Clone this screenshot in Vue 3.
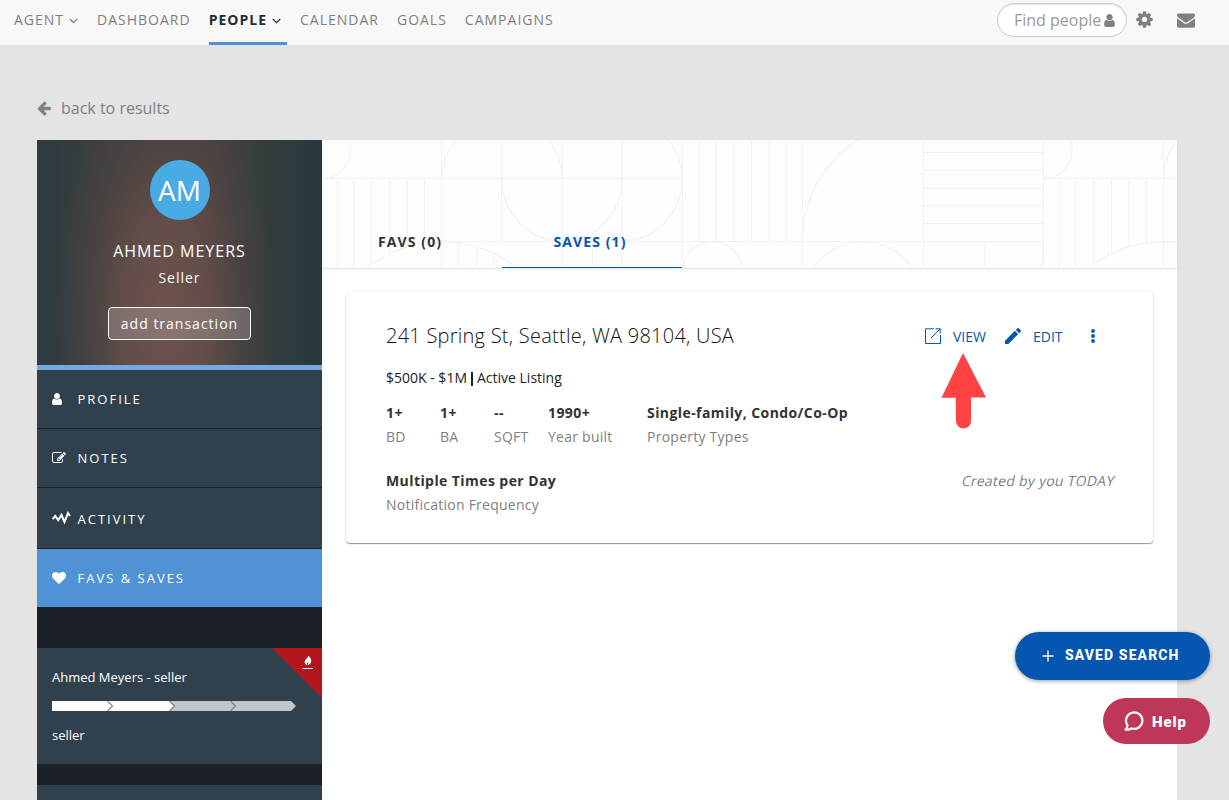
<script setup>
import { ref } from 'vue'

const navItems = [
  { label: 'AGENT', menu: true },
  { label: 'DASHBOARD' },
  { label: 'PEOPLE', menu: true },
  { label: 'CALENDAR' },
  { label: 'GOALS' },
  { label: 'CAMPAIGNS' }
]
const activeNav = ref('PEOPLE')

const userPath = 'M1536 1399q0 109-62.5 187t-150.5 78h-854q-88 0-150.5-78t-62.5-187q0-85 8.5-160.5t31.5-152 58.5-131 94-89 134.5-34.5q131 128 313 128t313-128q76 0 134.5 34.5t94 89 58.5 131 31.5 152 8.5 160.5zm-256-887q0 159-112.5 271.5t-271.5 112.5-271.5-112.5-112.5-271.5 112.5-271.5 271.5-112.5 271.5 112.5 112.5 271.5z'

const menuItems = [
  { id: 'profile', label: 'PROFILE', box: '256 0 1280 1792', width: 10, path: userPath },
  {
    id: 'notes',
    label: 'NOTES',
    box: '0 0 1792 1792',
    width: 14,
    path: 'M888 1184l116-116-152-152-116 116v56h96v96h56zm440-720q-16-16-33 1l-350 350q-17 17-1 33t33-1l350-350q17-17 1-33zm80 594v190q0 119-84.5 203.5t-203.5 84.5h-832q-119 0-203.5-84.5t-84.5-203.5v-832q0-119 84.5-203.5t203.5-84.5h832q63 0 117 25 15 7 18 23 3 17-9 29l-49 49q-14 14-32 8-23-6-45-6h-832q-66 0-113 47t-47 113v832q0 66 47 113t113 47h832q66 0 113-47t47-113v-126q0-13 9-22l64-64q15-15 35-7t20 29zm-96-738l288 288-672 672h-288v-288zm444 132l-92 92-288-288 92-92q28-28 68-28t68 28l152 152q28 28 28 68t-28 68z'
  },
  { id: 'activity', label: 'ACTIVITY' },
  {
    id: 'favs',
    label: 'FAVS & SAVES',
    box: '0 0 1792 1792',
    width: 14,
    path: 'M896 1664q-26 0-44-18l-624-602q-10-8-27.5-26t-55.5-65.5-68-97.5-53.5-121-23.5-138q0-220 127-344t351-124q62 0 126.5 21.5t120 58 95.5 68.5 76 68q36-36 76-68t95.5-68.5 120-58 126.5-21.5q224 0 351 124t127 344q0 221-229 450l-623 600q-18 18-44 18z'
  }
]
const activeMenu = ref('favs')
const activeTab = ref('saves')

const details = [
  { id: 'bd', value: '1+', label: 'BD' },
  { id: 'ba', value: '1+', label: 'BA' },
  { id: 'sqft', value: '--', label: 'SQFT' },
  { id: 'year', value: '1990+', label: 'Year built' },
  { id: 'types', value: 'Single-family, Condo/Co-Op', label: 'Property Types' }
]
</script>

<template>
  <div class="page">
    <header class="topbar">
      <nav class="nav">
        <a
            v-for="item in navItems"
            :key="item.label"
            class="nav-item"
            :class="{ active: activeNav === item.label, 'has-menu': item.menu }"
            @click="activeNav = item.label"
        >
          <span>{{ item.label }}</span>
          <svg v-if="item.menu" class="chevron" viewBox="0 0 9 6" width="9" height="6">
            <path d="M.8 1l3.7 3.7L8.2 1" fill="none" stroke="currentColor" stroke-width="1.2" />
          </svg>
        </a>
      </nav>
      <div class="tools">
        <div class="search">
          <span>Find people</span>
          <svg viewBox="256 0 1280 1792" width="11" height="15"><path :d="userPath" /></svg>
        </div>
        <svg class="cog" viewBox="0 0 1792 1792" width="19" height="19">
          <path d="M1152 896q0-106-75-181t-181-75-181 75-75 181 75 181 181 75 181-75 75-181zm512-109v222q0 12-8 23t-20 13l-185 28q-19 54-39 91 35 50 107 138 10 12 10 25t-9 23q-27 37-99 108t-94 71q-12 0-26-9l-138-108q-44 23-91 38-16 136-29 186-7 28-36 28h-222q-14 0-24.5-8.5t-11.5-21.5l-28-184q-49-16-90-37l-141 107q-10 9-25 9-14 0-25-11-126-114-165-168-7-10-7-23 0-12 8-23 15-21 51-66.5t54-70.5q-27-50-41-99l-183-27q-13-2-21-12.5t-8-23.5v-222q0-12 8-23t19-13l186-28q14-46 39-92-40-57-107-138-10-12-10-24 0-10 9-23 26-36 98.5-107.5t94.5-71.5q13 0 26 10l138 107q44-23 91-38 16-136 29-186 7-28 36-28h222q14 0 24.5 8.5t11.5 21.5l28 184q49 16 90 37l142-107q9-9 24-9 13 0 25 10 129 119 165 170 7 8 7 22 0 12-8 23-15 21-51 66.5t-54 70.5q26 50 41 98l183 28q13 2 21 12.5t8 23.5z" />
        </svg>
        <svg class="mail" viewBox="0 0 1792 1792" width="18" height="18">
          <path d="M1792 710v794q0 66-47 113t-113 47h-1472q-66 0-113-47t-47-113v-794q44 49 101 87 362 246 497 345 57 42 92.5 65.5t94.5 48 110 24.5h2q51 0 110-24.5t94.5-48 92.5-65.5q170-123 498-345 57-39 100-87zm0-294q0 79-49 151t-122 123q-376 261-468 325-10 7-42.5 31t-54 38.5-52 32.5-57.5 27-50 9h-2q-23 0-50-9t-57.5-27-52-32.5-54-38.5-42.5-31q-91-64-262-182.5t-205-142.5q-62-42-117-115.5t-55-136.5q0-78 41.5-130t118.5-52h1472q65 0 112.5 47t47.5 113z" />
        </svg>
      </div>
    </header>

    <a class="back">
      <svg viewBox="0 0 1792 1792" width="16" height="16">
        <path d="M1664 896v128q0 53-32.5 90.5t-84.5 37.5h-704l293 294q38 36 38 90t-38 90l-75 76q-37 37-90 37-52 0-91-37l-651-652q-37-37-37-90 0-52 37-91l651-650q38-38 91-38 52 0 90 38l75 74q38 38 38 91t-38 91l-293 293h704q52 0 84.5 37.5t32.5 90.5z" />
      </svg>
      <span>back to results</span>
    </a>

    <div class="content">
      <aside class="sidebar">
        <div class="profile">
          <div class="avatar">AM</div>
          <div class="name">AHMED MEYERS</div>
          <div class="role">Seller</div>
          <button class="add-button">add transaction</button>
        </div>
        <a
            v-for="item in menuItems"
            :key="item.id"
            class="menu-item"
            :class="{ tall: item.id === 'activity', selected: activeMenu === item.id }"
            @click="activeMenu = item.id"
        >
          <span class="menu-icon">
            <svg v-if="item.path" :viewBox="item.box" :width="item.width" height="14"><path :d="item.path" /></svg>
            <svg v-else class="pulse" viewBox="0 0 19 13" width="19" height="13">
              <path d="M.7 8.2L3.2 5l3 4.2L9.5 4l3 7L16 2l2 3" />
            </svg>
          </span>
          <span>{{ item.label }}</span>
        </a>
        <div class="transaction">
          <svg class="corner" viewBox="0 0 50 50" width="50" height="50">
            <path d="M0 0h50v50z" fill="#b3151c" />
            <path d="M36.2 7.8c2.6 1.700 3.500 4.200 2.900 6.200-.5 1.900-2 3-3.700 3.200.9-1.200 1-2.100.5-3.200-.8 1-1.200 2-.6 3.200-2.600-.9-3.300-3.500-1.800-5.500 1.200-1.500 2.600-2.200 2.700-3.900z" fill="#fff" />
            <path d="M30.500 20.500h10.500" stroke="#fff" />
          </svg>
          <div>Ahmed Meyers - seller</div>
          <svg class="progress" viewBox="0 0 244 10" width="244" height="10">
            <path d="M116 0h123l5 5-5 5H116z" fill="#c1c6ca" />
            <path d="M0 0h117l5 5-5 5H0z" fill="#fff" />
            <g fill="none" stroke="#7d868c" stroke-width="1.2">
              <path d="M55.500 0l5 5-5 5" />
              <path d="M117.500 0l5 5-5 5" />
              <path d="M178.500 0l5 5-5 5" />
            </g>
          </svg>
          <div>seller</div>
        </div>
        <div class="next-transaction"></div>
      </aside>

      <main class="main">
        <div class="tab-header">
          <svg class="pattern" viewBox="0 0 855 129" width="855" height="129">
            <g fill="none" stroke="#f1f1f1">
              <path d="M0 38.700H360.500M120 101.500H721M721 38.700H855M841 101.800H855" />
              <path d="M119.500 0V129M179.500 0V101M240.500 0V129M300 0V129M360.500 0V129M480.500 0V129M601.500 0V129M721.500 0V129M841.500 0V129" />
              <path d="M15.500 39V129M32 39V129M49.500 39V125M67.500 39V113M85.300 39V106M102.500 39V103M136.500 103V129M154.500 107V129M171.500 114V129M189.500 125V129M270.500 101V129M663 101V129" />
              <path d="M377.500 0V101M394 0V101M411.500 0V101M429.500 0V101M447.300 0V101M464.500 0V101" />
              <path d="M601 12.500H721M601 30.500H721M601 48.500H721M601 66H721M601 83.500H721" />
              <path d="M737.300 39V129M753.500 39V129M771.500 39V125M789.500 39V113M807 39V106M824.500 39V103" />
              <circle cx="0" cy="10" r="28.700" />
              <path d="M119.700 38.700a60 60 0 0 1 120.600 0M300 -21.300a60 60 0 0 1 60.300 60M179.700 38.700a60.200 62.500 0 0 0 120.600 0M360.300 38.700a60 62.500 0 0 1-60 62.500" />
              <circle cx="120" cy="221.700" r="120" />
              <circle cx="390.300" cy="131.300" r="29.800" />
              <path d="M480.300 101.300A120.500 120.500 0 0 1 600.800-19.200" />
              <circle cx="540.700" cy="162" r="60.300" />
              <path d="M721.500-18.700a28.700 28.700 0 0 1 0 57.400M718.700 129q2-8 2.300-20M841.300 38.700a60 60 0 0 1 60-60" />
              <path d="M721.300 221.700a120 120 0 0 1 240 0" />
            </g>
          </svg>
          <div class="tabs">
            <a class="tab" :class="{ current: activeTab === 'favs' }" @click="activeTab = 'favs'">FAVS (0)</a>
            <a class="tab" :class="{ current: activeTab === 'saves' }" @click="activeTab = 'saves'">SAVES (1)</a>
          </div>
        </div>

        <section class="card">
          <div class="card-top">
            <h2>241 Spring St, Seattle, WA 98104, USA</h2>
            <div class="actions">
              <svg class="view-icon" viewBox="0 0 16 16" width="16" height="16">
                <path d="M9 .8H.5v14.700h15V7M6 10L15 1M10.500.8h4.700v4.700" fill="none" stroke="currentColor" />
              </svg>
              <a class="view">VIEW</a>
              <svg class="edit-icon" viewBox="3 3 18 18" width="16" height="16">
                <path d="M3 17.250V21h3.750L17.810 9.940l-3.750-3.750L3 17.250zM20.710 7.040a1 1 0 0 0 0-1.410l-2.340-2.340a1 1 0 0 0-1.410 0l-1.830 1.830 3.750 3.750 1.830-1.830z" fill="currentColor" />
              </svg>
              <a class="edit">EDIT</a>
              <svg class="more" viewBox="0 0 4 14" width="4" height="14">
                <g fill="currentColor">
                  <circle cx="2" cy="2" r="1.900" />
                  <circle cx="2" cy="7" r="1.900" />
                  <circle cx="2" cy="12" r="1.900" />
                </g>
              </svg>
            </div>
          </div>
          <div class="price">
            <span>$500K - $1M</span>
            <i class="divider"></i>
            <span>Active Listing</span>
          </div>
          <div class="details">
            <div v-for="detail in details" :key="detail.id" class="detail" :class="detail.id">
              <b>{{ detail.value }}</b>
              <span>{{ detail.label }}</span>
            </div>
          </div>
          <div class="card-bottom">
            <div class="detail frequency">
              <b>Multiple Times per Day</b>
              <span>Notification Frequency</span>
            </div>
            <span class="created">Created by you TODAY</span>
          </div>
        </section>
      </main>
    </div>

    <svg class="pointer" viewBox="0 0 46 78" width="46" height="78">
      <path d="M22 1l23 44.500H30V69a7.500 7.500 0 0 1-15 0L14.700 45.800H.500z" fill="#ff4244" />
    </svg>
    <button class="saved-search">
      <svg viewBox="0 0 12 12" width="12" height="12"><path d="M6 .5v11M.5 6h11" stroke="#fff" stroke-width="1.400" /></svg>
      <span>SAVED SEARCH</span>
    </button>
    <button class="help">
      <svg viewBox="0 0 20 20" width="20" height="20">
        <path d="M3.400 14.200A8.200 8.200 0 1 1 7.300 17.300C5.500 18.600 3.500 18.900 1.500 18.500 2.900 17.200 3.500 16 3.400 14.200z" fill="none" stroke="#fff" stroke-width="2.200" stroke-linejoin="round" />
      </svg>
      <span>Help</span>
    </button>
  </div>
</template>

<style>
body {
  margin: 0;
  overflow: hidden;
}
</style>

<style scoped>
.page {
  position: relative;
  height: 800px;
  overflow: hidden;
  background: #e4e4e4;
  font-family: "Open Sans", sans-serif;
  color: #333;
}

.page * {
  box-sizing: border-box;
}

svg {
  display: block;
  flex: none;
}

a, button {
  cursor: pointer;
  white-space: nowrap;
}

/* top bar */
.topbar {
  display: flex;
  justify-content: space-between;
  height: 45px;
  padding-left: 14px;
  background: #f8f8f8;
}

.nav {
  display: flex;
  gap: 18px;
}

.nav-item {
  display: flex;
  height: 45px;
  padding-bottom: 7px;
  align-items: center;
  font-size: 14px;
  letter-spacing: 1px;
  color: #808080;
}

.has-menu {
  margin-right: -5px;
}

.chevron {
  margin: 3px 6px 0 5px;
}

.nav-item.active {
  padding-bottom: 4px;
  border-bottom: 3px solid #4f93d6;
  font-weight: 700;
  color: #222d35;
}

.tools {
  display: flex;
  padding-top: 3px;
  fill: #808080;
}

.search {
  display: flex;
  align-items: center;
  width: 130px;
  height: 34px;
  padding-left: 16px;
  border: 1px solid #ccc;
  border-radius: 17px;
  background: #fff;
  box-shadow: inset 0 1px 2px rgba(0, 0, 0, .1);
  font-size: 16px;
  color: #999;
}

.search svg {
  margin-left: 3px;
}

.cog {
  margin: 7px 0 0 8px;
}

.mail {
  margin: 8px 34px 0 23px;
}

.back {
  display: flex;
  align-items: center;
  height: 95px;
  padding: 31px 0 0 36px;
  font-size: 16px;
  color: #808080;
  fill: #808080;
}

.back span {
  margin-left: 9px;
}

.content {
  display: flex;
  width: 1140px;
  height: 660px;
  margin-left: 37px;
}

/* sidebar */
.sidebar {
  width: 285px;
  background: #1b2127;
  color: #fff;
  fill: #fff;
}

.profile {
  display: flex;
  flex-direction: column;
  align-items: center;
  height: 230px;
  padding-top: 20px;
  border-bottom: 5px solid #74aae2;
  background:
    radial-gradient(ellipse 110px 260px at 128px 175px, rgba(112, 82, 77, .95) 0%, rgba(106, 80, 75, .85) 35%, rgba(88, 72, 68, .45) 70%, rgba(60, 60, 58, 0) 100%),
    linear-gradient(90deg, #2e3b40 0%, #3c3e3d 25%, #454140 60%, #363d3e 78%, #28383d 100%);
}

.avatar {
  width: 60px;
  height: 60px;
  border-radius: 50%;
  background: #4aabe3;
  font-size: 28px;
  line-height: 61px;
  text-align: center;
}

.name {
  margin-top: 19px;
  font-size: 16px;
  line-height: 24px;
  letter-spacing: 1px;
}

.role {
  margin-top: 4px;
  font-size: 14px;
  line-height: 22px;
  letter-spacing: 1px;
}

.add-button {
  width: 143px;
  height: 33px;
  margin-top: 18px;
  padding: 0;
  border: 1px solid #fff;
  border-radius: 4px;
  background: rgba(255, 255, 255, .2);
  font: 14px "Open Sans", sans-serif;
  letter-spacing: 1px;
  color: #fff;
}

.menu-item {
  display: flex;
  align-items: center;
  height: 59px;
  padding-left: 15px;
  border-bottom: 1px solid #1b2127;
  background: #30414d;
  font-size: 13px;
  letter-spacing: 2px;
}

.menu-icon {
  width: 25.5px;
}

.menu-item.tall {
  height: 61px;
  padding-top: 2px;
}

.pulse {
  margin-top: -3px;
  fill: none;
  stroke: #fff;
  stroke-width: 2;
}

.menu-item.selected {
  background: #4f93d6;
}

.transaction {
  position: relative;
  height: 116px;
  margin-top: 40px;
  padding: 19px 15px;
  background: #30414d;
  font-size: 13px;
  line-height: 20px;
}

.corner {
  position: absolute;
  top: 0;
  right: 0;
}

.progress {
  margin: 14px 0;
}

.next-transaction {
  height: 15px;
  margin-top: 21px;
  background: #30414d;
}

/* main */
.main {
  width: 855px;
  background: #fff;
}

.tab-header {
  position: relative;
  height: 129px;
  background: #fdfdfd;
  border-bottom: 1px solid #e8e8e8;
  box-shadow: 0 1px 2px rgba(0, 0, 0, .06);
}

.pattern {
  position: absolute;
  top: 0;
  left: 0;
}

.tabs {
  position: relative;
  display: flex;
  height: 128px;
  align-items: flex-end;
}

.tab {
  width: 180px;
  height: 48px;
  padding-left: 56px;
  font-size: 14px;
  font-weight: 700;
  line-height: 44px;
  letter-spacing: 1.1px;
}

.tab.current {
  padding-left: 51.5px;
  border-bottom: 1px solid #0556b1;
  color: #0556b1;
}

.card {
  height: 251px;
  margin: 23px 24px 0;
  padding: 29px 38px 0 40px;
  border-radius: 4px;
  box-shadow: 0 1px 1px rgba(0, 0, 0, .4), 0 0 2px rgba(0, 0, 0, .15);
  font-size: 14px;
}

.card-top {
  display: flex;
  justify-content: space-between;
  height: 30px;
}

h2 {
  margin: 0;
  font-size: 20px;
  font-weight: 300;
  line-height: 30px;
  letter-spacing: .25px;
  color: #111;
}

.actions {
  display: flex;
  align-items: center;
  width: 190px;
  color: #0556b1;
}

.view {
  width: 52px;
  margin-left: 12px;
}

.edit {
  width: 58px;
  margin-left: 12px;
}

.price {
  display: flex;
  align-items: center;
  height: 20px;
  margin-top: 16px;
  color: #222;
}

.divider {
  width: 2px;
  height: 14px;
  margin: 4px 4px 0;
  background: #222;
}

.details {
  display: flex;
  margin-top: 14px;
}

.detail {
  display: flex;
  flex-direction: column;
  width: 54px;
  line-height: 24px;
  letter-spacing: .25px;
  white-space: nowrap;
  color: #808080;
}

.detail b {
  letter-spacing: .42px;
  color: #333;
}

.detail.year {
  width: 99px;
}

.card-bottom {
  display: flex;
  justify-content: space-between;
  margin-top: 20px;
}

/* slanted upright face, not the italic one */
.created {
  height: 24px;
  line-height: 24px;
  letter-spacing: .25px;
  color: #808080;
  transform: skewX(-12deg);
}

/* things floating over the page */
.pointer {
  position: absolute;
  top: 352px;
  left: 941px;
}

.saved-search, .help {
  position: absolute;
  right: 19px;
  display: flex;
  align-items: center;
  border: 0;
  font-family: Roboto, sans-serif;
  color: #fff;
}

.saved-search {
  top: 632px;
  width: 195px;
  height: 48px;
  padding: 0 0 1px 27px;
  border-radius: 24px;
  background: #0556b1;
  box-shadow: 0 1px 4px rgba(0, 0, 0, .4);
  font-size: 14px;
  font-weight: 800;
  letter-spacing: 1.1px;
}

.saved-search span {
  margin: -1px 0 0 11px;
}

.help {
  top: 698px;
  width: 107px;
  height: 46px;
  padding: 0 0 0 21px;
  border-radius: 23px;
  background: #be3658;
  font-size: 15px;
  font-weight: 900;
  letter-spacing: .9px;
}

.help span {
  margin: 1px 0 0 8px;
}
</style>
